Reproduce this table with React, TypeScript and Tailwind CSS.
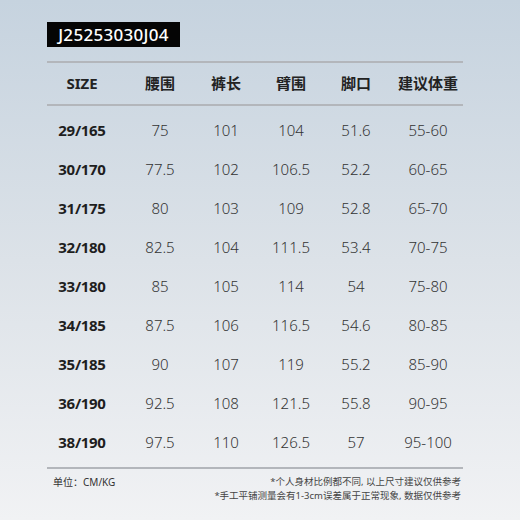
const HEAD = ["SIZE", "腰围", "裤长", "臂围", "脚口", "建议体重"];

const ROWS = [
  ["29/165", "75", "101", "104", "51.6", "55-60"],
  ["30/170", "77.5", "102", "106.5", "52.2", "60-65"],
  ["31/175", "80", "103", "109", "52.8", "65-70"],
  ["32/180", "82.5", "104", "111.5", "53.4", "70-75"],
  ["33/180", "85", "105", "114", "54", "75-80"],
  ["34/185", "87.5", "106", "116.5", "54.6", "80-85"],
  ["35/185", "90", "107", "119", "55.2", "85-90"],
  ["36/190", "92.5", "108", "121.5", "55.8", "90-95"],
  ["38/190", "97.5", "110", "126.5", "57", "95-100"],
];

const GRID = "grid grid-cols-[70px_86px_46px_84px_46px_98px] w-[430px]";

export default function App() {
  return (
    <div
      className="w-[520px] h-[520px] bg-gradient-to-b from-[#c6d3df] via-[#dce2e8] to-[#f1f2f4] pl-[47px] pt-[22px]"
      style={{ fontFamily: '"Noto Sans", "Noto Sans CJK SC", sans-serif' }}
    >
      <div className="w-[133px] h-[25px] bg-[#050505] text-white text-[17px] font-medium tracking-[0.3px] flex items-center justify-center leading-none">
        J25253030J04
      </div>

      <div className="w-[416px] mt-[14px]">
        <div className="h-[2px] bg-[#b3b6bb]" />
        <div className={`${GRID} h-[41px] items-center`}>
          {HEAD.map((h) => (
            <div key={h} className="text-center text-[15px] font-bold text-[#222]">
              {h}
            </div>
          ))}
        </div>
        <div className="h-[2px] bg-[#b3b6bb]" />

        <div className="pt-[5px] pb-[5px]">
          {ROWS.map((r) => (
            <div key={r[0]} className={`${GRID} h-[39px] items-center`}>
              {r.map((c, i) => (
                <div
                  key={i}
                  className={
                    i === 0
                      ? "text-center text-[15px] font-bold text-[#1e1e1e] tracking-[-0.3px]"
                      : "text-center text-[15px] font-light text-[#333]"
                  }
                >
                  {c}
                </div>
              ))}
            </div>
          ))}
        </div>

        <div className="h-[2px] bg-[#b3b6bb]" />

        <div className="flex justify-between pt-[6px] pl-[6px] pr-[2px] leading-[14px] text-[#333]">
          <div className="text-[10px]">单位：CM/KG</div>
          <div className="text-right text-[9.5px] text-[#444]">
            <div>*个人身材比例都不同, 以上尺寸建议仅供参考</div>
            <div>*手工平铺测量会有1-3cm误差属于正常现象, 数据仅供参考</div>
          </div>
        </div>
      </div>
    </div>
  );
}
